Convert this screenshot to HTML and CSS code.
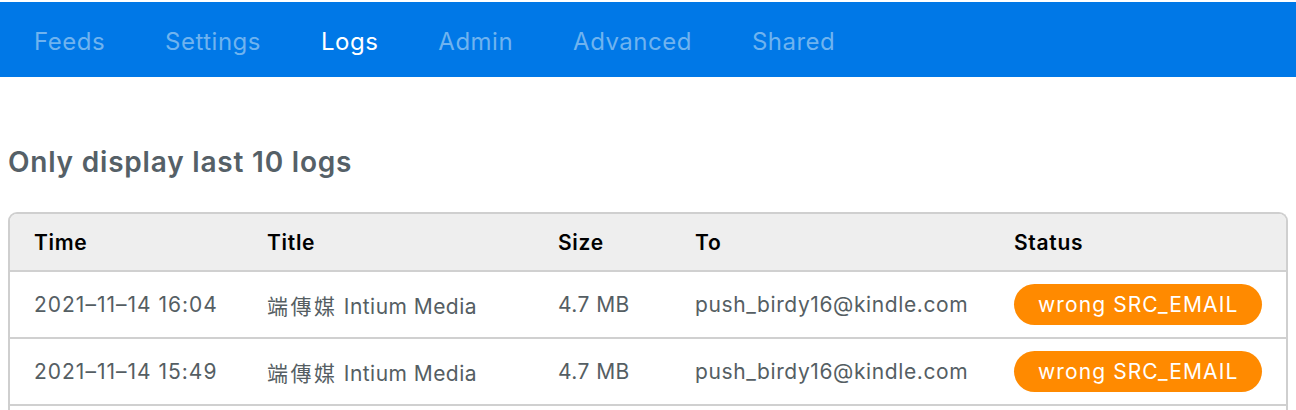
FILE: index.html
```html
<!DOCTYPE html>
<html>
<head>
<meta charset="utf-8">
<link rel="stylesheet" href="styles.css">
</head>
<body>
<nav class="nav">
  <a class="nav-link">Feeds</a>
  <a class="nav-link">Settings</a>
  <a class="nav-link active">Logs</a>
  <a class="nav-link">Admin</a>
  <a class="nav-link">Advanced</a>
  <a class="nav-link">Shared</a>
</nav>
<main class="main">
  <h2 class="title">Only display last 10 logs</h2>
  <div class="table-wrap">
    <table class="logs">
      <colgroup>
        <col class="c-time"><col class="c-title"><col class="c-size"><col class="c-to"><col>
      </colgroup>
      <thead>
        <tr><th>Time</th><th>Title</th><th>Size</th><th>To</th><th>Status</th></tr>
      </thead>
      <tbody>
        <tr><td class="time">2021–11–14 16:04</td><td><span class="cjk">端傳媒</span> Intium Media</td><td>4.7 MB</td><td class="email">push_birdy16@kindle.com</td><td><span class="badge">wrong SRC_EMAIL</span></td></tr>
        <tr><td class="time">2021–11–14 15:49</td><td><span class="cjk">端傳媒</span> Intium Media</td><td>4.7 MB</td><td class="email">push_birdy16@kindle.com</td><td><span class="badge">wrong SRC_EMAIL</span></td></tr>
      </tbody>
    </table>
  </div>
</main>
</body>
</html>
```
FILE: styles.css
```css
html, body {
  margin: 0;
  padding: 0;
  background: #fff;
  font-family: Inter, "Liberation Sans", "Noto Sans CJK TC", sans-serif;
}
body {
  padding-top: 2px;
}
.nav {
  background: #0078e7;
  height: 75px;
  display: flex;
  align-items: center;
  padding-left: 4px;
}
.nav-link {
  color: #6fb3ef;
  font-size: 24px;
  letter-spacing: 0.5px;
  padding: 4px 30px 0 30px;
  line-height: 30px;
}
.nav-link.active {
  color: #fff;
}
.main {
  padding: 0 8px;
}
.title {
  margin: 68px 0 0 0;
  height: 35px;
  line-height: 35px;
  font-size: 28px;
  font-weight: 600;
  letter-spacing: 0.8px;
  color: #556067;
}
.table-wrap {
  margin-top: 32px;
  border: 2px solid #cfcfcf;
  border-bottom: none;
  border-radius: 9px 9px 0 0;
  overflow: hidden;
  padding-bottom: 8px;
}
.logs {
  width: 100%;
  border-collapse: collapse;
  table-layout: fixed;
}
.c-time { width: 233px; }
.c-title { width: 291px; }
.c-size { width: 137px; }
.c-to { width: 319px; }
.logs th {
  background: #eeeeee;
  color: #000;
  font-weight: 600;
  font-size: 21px;
  letter-spacing: 0.7px;
  text-align: left;
  height: 56px;
  padding: 0 0 0 24px;
  border-bottom: 2px solid #d0d0d0;
}
.logs td {
  color: #555e63;
  font-size: 21px;
  letter-spacing: 0.45px;
  height: 65px;
  padding: 0 0 0 24px;
  border-bottom: 2px solid #d0d0d0;
  white-space: nowrap;
}
.logs td.time {
  letter-spacing: 1px;
}
.logs td.email {
  letter-spacing: 0.6px;
}
.cjk {
  letter-spacing: 2.5px;
}
.badge {
  display: inline-block;
  background: #ff8a00;
  color: #fff;
  border-radius: 21px;
  padding: 0 24px;
  height: 41px;
  line-height: 41px;
  letter-spacing: 1.1px;
}
```
